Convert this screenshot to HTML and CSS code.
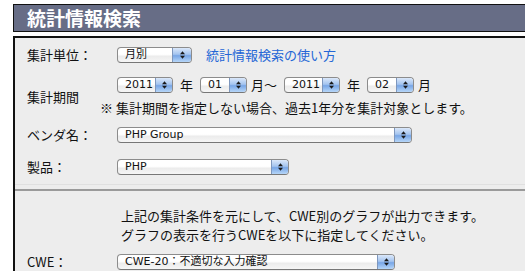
FILE: index.html
```html
<!DOCTYPE html>
<html lang="ja">
<head>
<meta charset="utf-8">
<title>統計情報検索</title>
<link rel="stylesheet" href="styles.css">
</head>
<body>
<div class="page">
  <div class="header"><h1 class="title">統計情報検索</h1></div>
  <div class="panel">
    <div class="cond">
      <div class="row row-unit">
        <div class="label">集計単位：</div>
        <div class="field">
          <span class="sel sel-unit"><span class="sel-text">月別</span><span class="sel-btn"><svg width="7" height="10" viewBox="0 0 7 10"><path d="M3.5 1.2 L6 4.2 H1Z M3.5 8.8 L6 5.8 H1Z"/></svg></span></span>
          <a class="link" href="#">統計情報検索の使い方</a>
        </div>
      </div>
      <div class="row row-period">
        <div class="label">集計期間</div>
        <div class="field-col">
          <div class="dates">
            <span class="sel sel-year"><span class="sel-text">2011</span><span class="sel-btn"><svg width="7" height="10" viewBox="0 0 7 10"><path d="M3.5 1.2 L6 4.2 H1Z M3.5 8.8 L6 5.8 H1Z"/></svg></span></span>
            <span class="unit">年</span>
            <span class="sel sel-month"><span class="sel-text">01</span><span class="sel-btn"><svg width="7" height="10" viewBox="0 0 7 10"><path d="M3.5 1.2 L6 4.2 H1Z M3.5 8.8 L6 5.8 H1Z"/></svg></span></span>
            <span class="unit unit-tight">月～</span>
            <span class="sel sel-year"><span class="sel-text">2011</span><span class="sel-btn"><svg width="7" height="10" viewBox="0 0 7 10"><path d="M3.5 1.2 L6 4.2 H1Z M3.5 8.8 L6 5.8 H1Z"/></svg></span></span>
            <span class="unit">年</span>
            <span class="sel sel-month"><span class="sel-text">02</span><span class="sel-btn"><svg width="7" height="10" viewBox="0 0 7 10"><path d="M3.5 1.2 L6 4.2 H1Z M3.5 8.8 L6 5.8 H1Z"/></svg></span></span>
            <span class="unit unit-tight">月</span>
          </div>
          <p class="note">※ 集計期間を指定しない場合、過去1年分を集計対象とします。</p>
        </div>
      </div>
      <div class="row row-vendor">
        <div class="label">ベンダ名：</div>
        <div class="field">
          <span class="sel sel-vendor"><span class="sel-text">PHP Group</span><span class="sel-btn"><svg width="7" height="10" viewBox="0 0 7 10"><path d="M3.5 1.2 L6 4.2 H1Z M3.5 8.8 L6 5.8 H1Z"/></svg></span></span>
        </div>
      </div>
      <div class="row row-product">
        <div class="label">製品：</div>
        <div class="field">
          <span class="sel sel-product"><span class="sel-text">PHP</span><span class="sel-btn"><svg width="7" height="10" viewBox="0 0 7 10"><path d="M3.5 1.2 L6 4.2 H1Z M3.5 8.8 L6 5.8 H1Z"/></svg></span></span>
        </div>
      </div>
    </div>
    <div class="cwe">
      <p class="desc">上記の集計条件を元にして、CWE別のグラフが出力できます。<br>グラフの表示を行うCWEを以下に指定してください。</p>
      <div class="row row-cwe">
        <div class="label">CWE：</div>
        <div class="field">
          <span class="sel sel-cwe"><span class="sel-text">CWE-20：不適切な入力確認</span><span class="sel-btn"><svg width="7" height="10" viewBox="0 0 7 10"><path d="M3.5 1.2 L6 4.2 H1Z M3.5 8.8 L6 5.8 H1Z"/></svg></span></span>
        </div>
      </div>
    </div>
  </div>
</div>
</body>
</html>
```

FILE: styles.css
```css
html, body {
  margin: 0;
  padding: 0;
  background: #ffffff;
  overflow: hidden;
}
body {
  font-family: "Noto Sans CJK JP", sans-serif;
  font-size: 13px;
  color: #111;
}
.page {
  width: 512px;
  height: 267px;
  overflow: hidden;
  padding: 4px 0 0 13px;
}
.header {
  height: 28px;
  box-sizing: border-box;
  border: 1px solid #111;
  border-right: none;
  background: #676d86;
  display: flex;
  align-items: center;
  padding-left: 13px;
}
.title {
  margin: 0;
  color: #fff;
  font-size: 19px;
  font-weight: bold;
  line-height: 22px;
}
.panel {
  margin-top: 4px;
  border-top: 2px solid #111;
  border-left: 2px solid #111;
  background: #ededed;
  padding-left: 12px;
  height: 240px;
}
.cond {
  padding-top: 9px;
  padding-bottom: 9px;
  border-bottom: 1px solid #e0e0e0;
  margin-left: -12px;
  padding-left: 12px;
}
.row {
  display: flex;
  align-items: center;
}
.label {
  width: 90px;
  flex: none;
  line-height: 16px;
}
.field {
  display: flex;
  align-items: center;
  height: 16px;
}
.row-period { margin-top: 14px; }
.row-vendor { margin-top: 11px; }
.row-product { margin-top: 16px; }
.field-col {
  display: flex;
  flex-direction: column;
  margin-left: -17px;
}
.dates {
  display: flex;
  align-items: center;
  height: 16px;
  padding-left: 17px;
}
.unit {
  margin: 0 7px;
  line-height: 16px;
}
.unit-tight {
  margin-left: 4px;
}
.note {
  margin: 7px 0 0 0;
  line-height: 16px;
}
.link {
  color: #2466d6;
  text-decoration: none;
  margin-left: 14px;
  line-height: 16px;
}
.sel {
  display: inline-flex;
  align-items: stretch;
  height: 16px;
  box-sizing: border-box;
  border: 1px solid #8c8c8c;
  border-bottom-color: #777;
  border-radius: 4px;
  background: linear-gradient(#ffffff 0%, #ffffff 45%, #ececec 60%, #f6f6f6 100%);
  overflow: hidden;
  font-family: "DejaVu Sans", "Noto Sans CJK JP", sans-serif;
  font-size: 11px;
  color: #111;
  flex: none;
}
.sel-text {
  flex: 1;
  padding-left: 7px;
  line-height: 14px;
  white-space: nowrap;
  overflow: hidden;
}
.sel-btn {
  width: 16px;
  flex: none;
  border-left: 1px solid #7e97bd;
  background: linear-gradient(#dbe8fa 0%, #a4c4ef 45%, #78a6e6 55%, #b6d6f8 100%);
  display: flex;
  align-items: center;
  justify-content: center;
}
.sel-btn svg path { fill: #1a1a1a; }
.sel-unit { width: 75px; }
.sel-unit .sel-btn { width: 18px; }
.sel-year { width: 56px; }
.sel-month { width: 47px; }
.sel-vendor { width: 295px; }
.sel-product { width: 172px; }
.sel-cwe { width: 278px; }
.cwe {
  border-top: 2px solid #9a9a9a;
  margin-top: 4px;
  margin-left: -12px;
  padding-left: 12px;
}
.desc {
  margin: 15px 0 0 94px;
  line-height: 19px;
}
.row-cwe { margin-top: 10px; }
```
